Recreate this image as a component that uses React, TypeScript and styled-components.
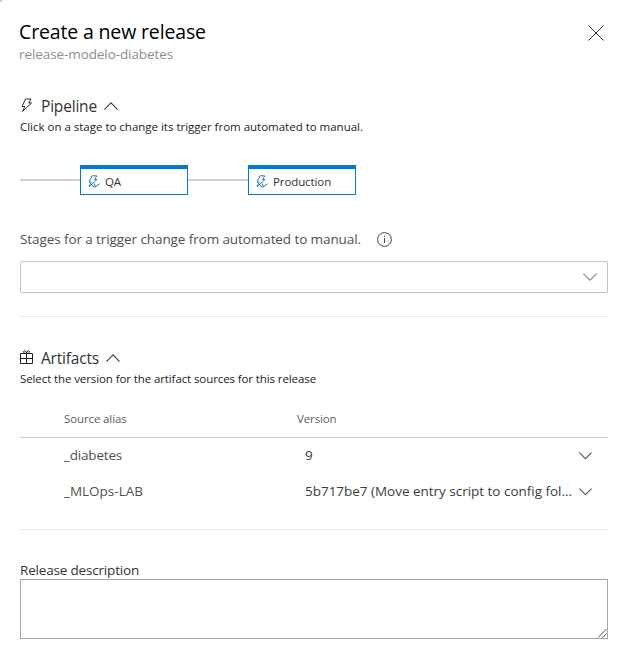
import React from "react";
import styled, { createGlobalStyle } from "styled-components";

const GlobalStyle = createGlobalStyle`
  * { box-sizing: border-box; }
  html, body { margin: 0; background: #b4b4b4; }
  body {
    font-family: "Open Sans", "Noto Sans", sans-serif;
    font-weight: 400;
    color: #333;
    overflow: hidden;
  }
  svg { display: block; flex: none; fill: none; }
`;

const Panel = styled.main`
  width: 619px;
  height: 655px;
  padding: 18px 11px 0 20px;
  background: #fff;
  border-top-left-radius: 4px;
  display: flex;
  flex-direction: column;
`;

const Header = styled.header`
  display: flex;
  justify-content: space-between;
  height: 77px;
`;

const Title = styled.h1`
  margin: 0 0 0 -1px;
  font-size: 19.5px;
  font-weight: 520;
  line-height: 28px;
  letter-spacing: -0.15px;
  color: #000;
`;

const Subtitle = styled.div`
  margin: -1px 0 0 -1px;
  font-size: 13.5px;
  line-height: 18px;
  letter-spacing: -0.09px;
  color: #8e8e8e;
`;

const CloseButton = styled.button`
  width: 16px;
  height: 16px;
  margin: 7px 4px 0 0;
  padding: 0;
  border: 0;
  background: none;
`;

const Section = styled.section<{ $height: number; $offset?: number }>`
  height: ${(p) => p.$height}px;
  padding-top: ${(p) => p.$offset ?? 0}px;
  flex: none;
  display: flex;
  flex-direction: column;
`;

const SectionHeading = styled.div`
  display: flex;
  align-items: center;
  height: 22px;
`;

const SectionTitle = styled.h2`
  margin: 0 7px;
  font-size: 15.5px;
  font-weight: 400;
  line-height: 22px;
  letter-spacing: -0.19px;
`;

const Hint = styled.p<{ $tight?: boolean }>`
  margin: 2px 0 0;
  font-size: 11.5px;
  line-height: 16px;
  letter-spacing: ${(p) => (p.$tight ? -0.1 : -0.012)}px;
  color: #222;
`;

const Pipeline = styled.div`
  display: flex;
  align-items: center;
  height: 30px;
  margin-top: 30px;
`;

const Connector = styled.div`
  width: 60px;
  height: 2px;
  background: #d0d0d0;
`;

const Stage = styled.div`
  display: flex;
  align-items: center;
  gap: 5px;
  width: 108px;
  height: 30px;
  padding: 0 0 0 7px;
  border: 1px solid #0078d4;
  border-top-width: 4px;
  font-size: 11.5px;
  line-height: 16px;
  letter-spacing: -0.1px;
`;

const FieldLabel = styled.div`
  display: flex;
  align-items: center;
  gap: 16px;
  height: 20px;
  margin-top: 34px;
  font-size: 13.5px;
  line-height: 20px;
  letter-spacing: -0.089px;
  color: #505050;
`;

const Select = styled.div`
  display: flex;
  align-items: center;
  justify-content: flex-end;
  width: 588px;
  height: 32px;
  margin-top: 12px;
  padding-right: 10px;
  border: 1px solid #c4c4c4;
  border-radius: 2px;
`;

const Divider = styled.hr`
  width: 588px;
  height: 1px;
  margin: 0;
  border: 0;
  flex: none;
  background: #eaeaea;
`;

const Table = styled.div`
  display: grid;
  grid-template-columns: 233px 1fr;
  width: 588px;
  margin-top: 24px;
`;

const HeadCell = styled.div`
  height: 27px;
  padding-left: 44px;
  border-bottom: 1px solid #c8c8c8;
  font-size: 11.5px;
  line-height: 16px;
  letter-spacing: -0.12px;
  color: #606060;
`;

const AliasCell = styled.div<{ $tracking: number }>`
  height: 36px;
  padding-left: 44px;
  font-size: 13.5px;
  line-height: 35px;
  letter-spacing: ${(p) => p.$tracking}px;
  color: #505050;
`;

const VersionCell = styled.div`
  display: flex;
  justify-content: space-between;
  height: 36px;
  padding: 0 16px 0 52px;
  font-size: 13.5px;
  line-height: 35px;
  letter-spacing: -0.02px;
  color: #3c3c3c;

  svg { margin-top: 14px; }
`;

const DescriptionLabel = styled.label`
  display: block;
  margin-top: 31px;
  font-size: 13.5px;
  line-height: 18px;
  letter-spacing: -0.18px;
`;

const DescriptionBox = styled.div`
  position: relative;
  width: 588px;
  height: 60px;
`;

const Description = styled.textarea`
  display: block;
  width: 100%;
  height: 100%;
  resize: none;
  border: 1px solid #a6a6a6;
  background: #fff;
`;

const Grip = styled.svg`
  position: absolute;
  right: 1px;
  bottom: 1px;
`;

interface ChevronProps {
  up?: boolean;
  width?: number;
  color?: string;
}

function Chevron({ up, width = 13, color = "#444" }: ChevronProps) {
  const half = width / 2;
  const d = up
    ? `M.4 ${half + 0.6}L${half} .8L${width - 0.4} ${half + 0.6}`
    : `M.4 .6L${half} ${half + 0.2}L${width - 0.4} .6`;
  return (
    <svg width={width} height="8" stroke={color} strokeWidth="1.1">
      <path d={d} />
    </svg>
  );
}

function BoltIcon() {
  return (
    <svg width="14" height="16" viewBox="0 0 14 16" stroke="#222" strokeWidth="0.95" strokeLinejoin="round">
      <path d="M5.5 1H11L8.8 5H11.5L2.5 13.5L4.8 8.5H2Z" />
    </svg>
  );
}

function StageIcon() {
  return (
    <svg width="12" height="14" viewBox="0 0 12 14" stroke="#2573b8" strokeWidth="0.95" strokeLinejoin="round">
      <path d="M4 .8H8.8L6.5 4.5H9L1 11.8L3.2 7H1ZM4 9.8L5.2 11.8H7.5L6 8.5M7.5 11.8L11.5 8.8" />
    </svg>
  );
}

function GiftIcon() {
  return (
    <svg width="14" height="16" viewBox="0 0 14 16" stroke="#222">
      <path d="M.5 3.5H12.5V13.5H.5ZM.5 8.5H12.5M6.5 3.5V13.5M6.5 3.5C5 3.5 3.2 2.8 3.5 1.6C4 .1 6.5 .9 6.5 3.5C6.5 .9 9 .1 9.5 1.6C9.8 2.8 8 3.5 6.5 3.5" />
    </svg>
  );
}

function InfoIcon() {
  return (
    <svg width="15" height="15" stroke="#444">
      <circle cx="7.5" cy="7.5" r="6.9" />
      <path d="M7.5 6V11M7.5 3.8V5" />
    </svg>
  );
}

export default function App() {
  return (
    <>
      <GlobalStyle />
      <Panel>
        <Header>
          <div>
            <Title>Create a new release</Title>
            <Subtitle>release-modelo-diabetes</Subtitle>
          </div>
          <CloseButton aria-label="Close">
            <svg width="16" height="16" stroke="#333">
              <path d="M.5 .5L15.5 15.5M15.5 .5L.5 15.5" />
            </svg>
          </CloseButton>
        </Header>
        <Section $height={221}>
          <SectionHeading>
            <BoltIcon />
            <SectionTitle>Pipeline</SectionTitle>
            <Chevron up width={14} />
          </SectionHeading>
          <Hint>Click on a stage to change its trigger from automated to manual.</Hint>
          <Pipeline>
            <Connector />
            <Stage><StageIcon />QA</Stage>
            <Connector />
            <Stage><StageIcon />Production</Stage>
          </Pipeline>
          <FieldLabel>
            Stages for a trigger change from automated to manual.
            <InfoIcon />
          </FieldLabel>
          <Select><Chevron color="#888" width={14} /></Select>
        </Section>
        <Divider />
        <Section $height={212} $offset={30}>
          <SectionHeading>
            <GiftIcon />
            <SectionTitle>Artifacts</SectionTitle>
            <Chevron up width={14} />
          </SectionHeading>
          <Hint $tight>Select the version for the artifact sources for this release</Hint>
          <Table>
            <HeadCell>Source alias</HeadCell>
            <HeadCell>Version</HeadCell>
            <AliasCell $tracking={-0.19}>_diabetes</AliasCell>
            <VersionCell>9<Chevron color="#555" /></VersionCell>
            <AliasCell $tracking={0}>_MLOps-LAB</AliasCell>
            <VersionCell>5b717be7 (Move entry script to config fol...<Chevron color="#555" /></VersionCell>
          </Table>
        </Section>
        <Divider />
        <DescriptionLabel htmlFor="description">Release description</DescriptionLabel>
        <DescriptionBox>
          <Description id="description" />
          <Grip width="10" height="10" stroke="#555">
            <path d="M1 9.5L9.5 1M5.5 9.5L9.5 5.5" />
          </Grip>
        </DescriptionBox>
      </Panel>
    </>
  );
}
